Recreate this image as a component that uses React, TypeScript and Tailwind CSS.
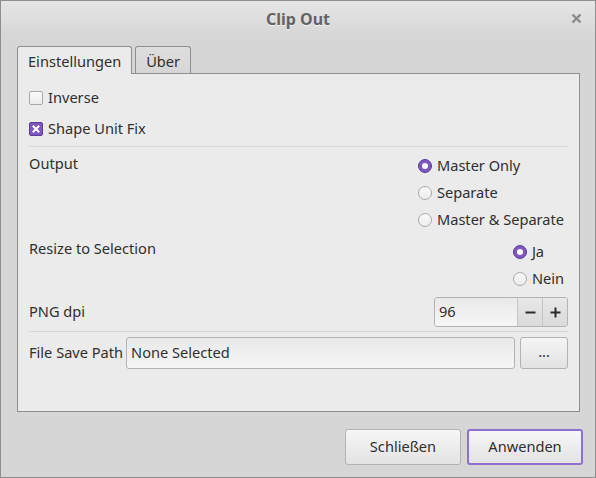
import React from "react";

const font = { fontFamily: '"Noto Sans", "Open Sans", sans-serif' };

function Check({ checked, label }: { checked?: boolean; label: string }) {
  return (
    <div className="flex items-center h-[31px]">
      {checked ? (
        <div className="w-[14px] h-[14px] rounded-[2px] border border-[#5b3d96] bg-[#7e57c2] flex items-center justify-center">
          <svg width="8" height="8" viewBox="0 0 8 8">
            <path d="M1.5 1.5 L6.5 6.5 M6.5 1.5 L1.5 6.5" stroke="#fff" strokeWidth="2" strokeLinecap="square" />
          </svg>
        </div>
      ) : (
        <div className="w-[14px] h-[14px] rounded-[2px] border border-[#a9a9a9] bg-gradient-to-b from-[#fafafa] to-[#ececec]" />
      )}
      <span className="ml-[5px]">{label}</span>
    </div>
  );
}

function Radio({ checked, label }: { checked?: boolean; label: string }) {
  return (
    <div className="flex items-center h-[27px]">
      {checked ? (
        <div className="w-[14px] h-[14px] rounded-full border border-[#5b3d96] bg-[#7e57c2] flex items-center justify-center">
          <div className="w-[6px] h-[6px] rounded-full bg-white" />
        </div>
      ) : (
        <div className="w-[14px] h-[14px] rounded-full border border-[#a9a9a9] bg-gradient-to-b from-[#fafafa] to-[#ececec]" />
      )}
      <span className="ml-[5px]">{label}</span>
    </div>
  );
}

export default function App() {
  return (
    <div
      className="w-[596px] h-[478px] border border-[#8e8e8e] bg-[#d6d6d6] flex flex-col text-[14.6px] text-[#2f2f2f]"
      style={font}
    >
      {/* title bar */}
      <div className="h-[35px] shrink-0 bg-gradient-to-b from-[#e6e6e6] to-[#d6d6d6] flex items-center">
        <div className="w-[40px]" />
        <div className="flex-1 text-center text-[16px] font-bold text-[#636363] [text-shadow:0_1px_0_#f0f0f0]">
          Clip Out
        </div>
        <div className="w-[40px] flex justify-end pr-[13px]">
          <svg width="11" height="11" viewBox="0 0 11 11">
            <path d="M1.5 1.5 L9.5 9.5 M9.5 1.5 L1.5 9.5" stroke="#8a8a8a" strokeWidth="2.4" />
          </svg>
        </div>
      </div>

      <div className="pl-[16px] pr-[15px] mt-[10px]">
        {/* tabs */}
        <div className="flex items-end h-[27px] gap-[2px]">
          <div className="relative z-10 h-[28px] -mb-px px-[10px] pt-[4px] rounded-t-[3px] border border-b-0 border-[#8e8e8e] bg-[#ebebeb]">
            Einstellungen
          </div>
          <div className="h-[27px] px-[10px] pt-[4px] rounded-t-[3px] border border-b-0 border-[#8e8e8e] bg-gradient-to-b from-[#dedede] to-[#d6d6d6] ml-px">
            Über
          </div>
        </div>

        {/* panel */}
        <div className="h-[339px] border border-[#8e8e8e] bg-[#ebebeb] px-[11px] pt-[8px]">
          <Check label="Inverse" />
          <Check checked label="Shape Unit Fix" />
          <div className="h-px bg-[#d9d9d9] mt-[2px]" />

          <div className="flex justify-between mt-[5px]">
            <div className="leading-[22px]">Output</div>
            <div className="flex flex-col pr-[4px]">
              <Radio checked label="Master Only" />
              <Radio label="Separate" />
              <Radio label="Master & Separate" />
            </div>
          </div>

          <div className="flex justify-between mt-[5px]">
            <div className="leading-[20px]">Resize to Selection</div>
            <div className="flex flex-col pr-[4px]">
              <Radio checked label="Ja" />
              <Radio label="Nein" />
            </div>
          </div>

          <div className="flex justify-between items-center mt-[5px]">
            <div>PNG dpi</div>
            <div className="flex h-[30px] w-[134px] rounded-[3px] border border-[#b3b3b3] overflow-hidden">
              <div className="flex-1 flex items-center pl-[4px] bg-gradient-to-b from-[#e9e9e9] to-[#f6f6f6]">96</div>
              <div className="w-[25px] flex items-center justify-center border-l border-[#c4c4c4] bg-gradient-to-b from-[#e8e8e8] to-[#dadada]">
                <svg width="11" height="11" viewBox="0 0 11 11">
                  <path d="M0.5 5.5 H10.5" stroke="#2a2a2a" strokeWidth="2" />
                </svg>
              </div>
              <div className="w-[25px] flex items-center justify-center border-l border-[#c4c4c4] bg-gradient-to-b from-[#e8e8e8] to-[#dadada]">
                <svg width="11" height="11" viewBox="0 0 11 11">
                  <path d="M0.5 5.5 H10.5 M5.5 0.5 V10.5" stroke="#2a2a2a" strokeWidth="2" />
                </svg>
              </div>
            </div>
          </div>

          <div className="h-px bg-[#d9d9d9] mt-[4px]" />

          <div className="flex items-center mt-[5px] h-[32px]">
            <div className="whitespace-nowrap mr-[3px]">File Save Path</div>
            <div className="flex-1 h-[32px] rounded-[3px] border border-[#b3b3b3] bg-gradient-to-b from-[#e9e9e9] to-[#f6f6f6] flex items-center pl-[4px]">
              None Selected
            </div>
            <div className="ml-[5px] w-[48px] h-[32px] rounded-[3px] border border-[#b3b3b3] bg-gradient-to-b from-[#f5f5f5] to-[#e2e2e2] flex items-center justify-center pb-[2px]">
              ...
            </div>
          </div>
        </div>
      </div>

      {/* footer buttons */}
      <div className="flex justify-end gap-[6px] pr-[12px] mt-[17px]">
        <div className="w-[116px] h-[36px] rounded-[3px] border border-[#b3b3b3] bg-gradient-to-b from-[#f6f6f6] to-[#e3e3e3] flex items-center justify-center">
          Schließen
        </div>
        <div className="w-[116px] h-[36px] rounded-[3px] border-2 border-[#9070cf] bg-gradient-to-b from-[#f6f6f6] to-[#e3e3e3] flex items-center justify-center">
          Anwenden
        </div>
      </div>
    </div>
  );
}
